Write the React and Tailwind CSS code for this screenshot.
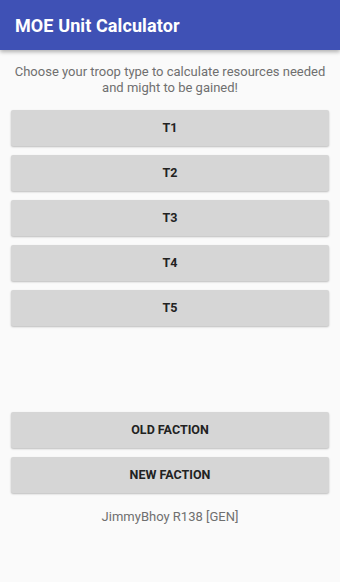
export default function App() {
  const troops = ["T1", "T2", "T3", "T4", "T5"];
  const btn =
    "h-[36px] w-full rounded-[2px] bg-[#d6d6d6] text-[12.5px] font-bold text-[#222222] shadow-[0_1px_2px_rgba(0,0,0,0.25)] flex items-center justify-center";
  return (
    <div
      className="w-[340px] h-[582px] bg-[#fafafa] flex flex-col"
      style={{ fontFamily: "Roboto, 'Liberation Sans', sans-serif" }}
    >
      <div className="h-[50px] bg-[#3f51b5] flex items-center px-[15px] shadow-[0_2px_4px_rgba(0,0,0,0.3)] z-10">
        <span className="text-white text-[18px] font-bold tracking-[0.1px]">MOE Unit Calculator</span>
      </div>
      <p className="pt-[14px] text-center text-[13px] leading-[16px] text-[#6f6f6f] px-2">
        Choose your troop type to calculate resources needed
        <br />
        and might to be gained!
      </p>
      <div className="mt-[14px] px-[11px] flex flex-col gap-[9px]">
        {troops.map((t) => (
          <div key={t} className={btn}>
            {t}
          </div>
        ))}
      </div>
      <div className="mt-[86px] px-[11px] flex flex-col gap-[9px]">
        <div className={btn}>OLD FACTION</div>
        <div className={btn}>NEW FACTION</div>
      </div>
      <p className="mt-[16px] text-center text-[13px] leading-[16px] text-[#6f6f6f]">
        JimmyBhoy R138 [GEN]
      </p>
    </div>
  );
}
